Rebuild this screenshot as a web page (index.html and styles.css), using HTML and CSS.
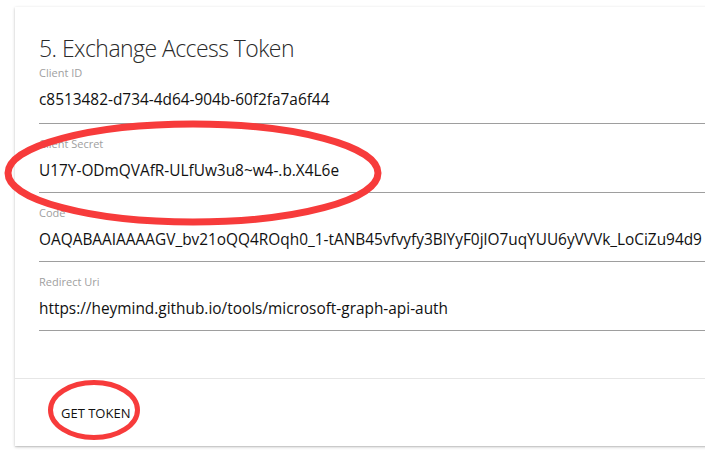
FILE: index.html
```html
<!DOCTYPE html>
<html>
<head>
<meta charset="utf-8">
<link rel="stylesheet" href="styles.css">
</head>
<body>
<div class="card">
  <div class="card-body">
    <h2 class="title">5. Exchange Access Token</h2>
    <div class="field">
      <div class="label">Client ID</div>
      <div class="value">c8513482-d734-4d64-904b-60f2fa7a6f44</div>
    </div>
    <div class="field">
      <div class="label">Client Secret</div>
      <div class="value">U17Y-ODmQVAfR-ULfUw3u8~w4-.b.X4L6e</div>
    </div>
    <div class="field">
      <div class="label">Code</div>
      <div class="value">OAQABAAIAAAAGV_bv21oQQ4ROqh0_1-tANB45vfvyfy3BlYyF0jlO7uqYUU6yVVVk_LoCiZu94d9</div>
    </div>
    <div class="field">
      <div class="label">Redirect Uri</div>
      <div class="value">https://heymind.github.io/tools/microsoft-graph-api-auth</div>
    </div>
  </div>
  <div class="card-actions">
    <button class="btn">GET TOKEN</button>
  </div>
</div>
<svg class="marks" width="705" height="450" viewBox="0 0 705 450">
  <ellipse cx="193" cy="173" rx="185" ry="49" />
  <ellipse cx="94" cy="410" rx="43.5" ry="27.5" class="small" />
</svg>
</body>
</html>
```
FILE: styles.css
```css
html, body {
  margin: 0;
  padding: 0;
  background: #fff;
  overflow: hidden;
}
body {
  width: 705px;
  height: 450px;
  position: relative;
  padding: 7px 0 0 15px;
  box-sizing: border-box;
  font-family: "Open Sans", "Noto Sans", sans-serif;
}
.card {
  width: 760px;
  height: 439px;
  background: #fff;
  box-shadow: 0 1px 3px rgba(0,0,0,0.22), 0 1px 1px rgba(0,0,0,0.08);
  display: flex;
  flex-direction: column;
  box-sizing: border-box;
}
.card-body {
  padding: 29px 0 47px 24px;
}
.title {
  margin: 0;
  font-size: 23px;
  line-height: 24px;
  font-weight: 300;
  letter-spacing: -0.55px;
  color: #2a2a2a;
}
.field {
  padding-top: 12px;
  padding-bottom: 10px;
  border-bottom: 1px solid #9e9e9e;
}
.field:first-of-type {
  padding-top: 5px;
  padding-bottom: 12px;
}
.label {
  font-size: 11px;
  line-height: 16px;
  color: #a0a0a0;
}
.value {
  margin-top: 8px;
  font-size: 15.4px;
  line-height: 22px;
  color: #111;
  white-space: nowrap;
}
.card-actions {
  border-top: 1px solid #e6e6e6;
  flex: 1;
  display: flex;
  align-items: center;
  padding-left: 46px;
}
.btn {
  background: none;
  border: 0;
  padding: 0;
  font-family: inherit;
  font-size: 13px;
  color: #111;
}
.marks {
  position: absolute;
  left: 0;
  top: 0;
  pointer-events: none;
}
.marks ellipse {
  fill: none;
  stroke: #f73b3b;
  stroke-width: 7;
}
.marks ellipse.small {
  stroke-width: 5;
}
```
